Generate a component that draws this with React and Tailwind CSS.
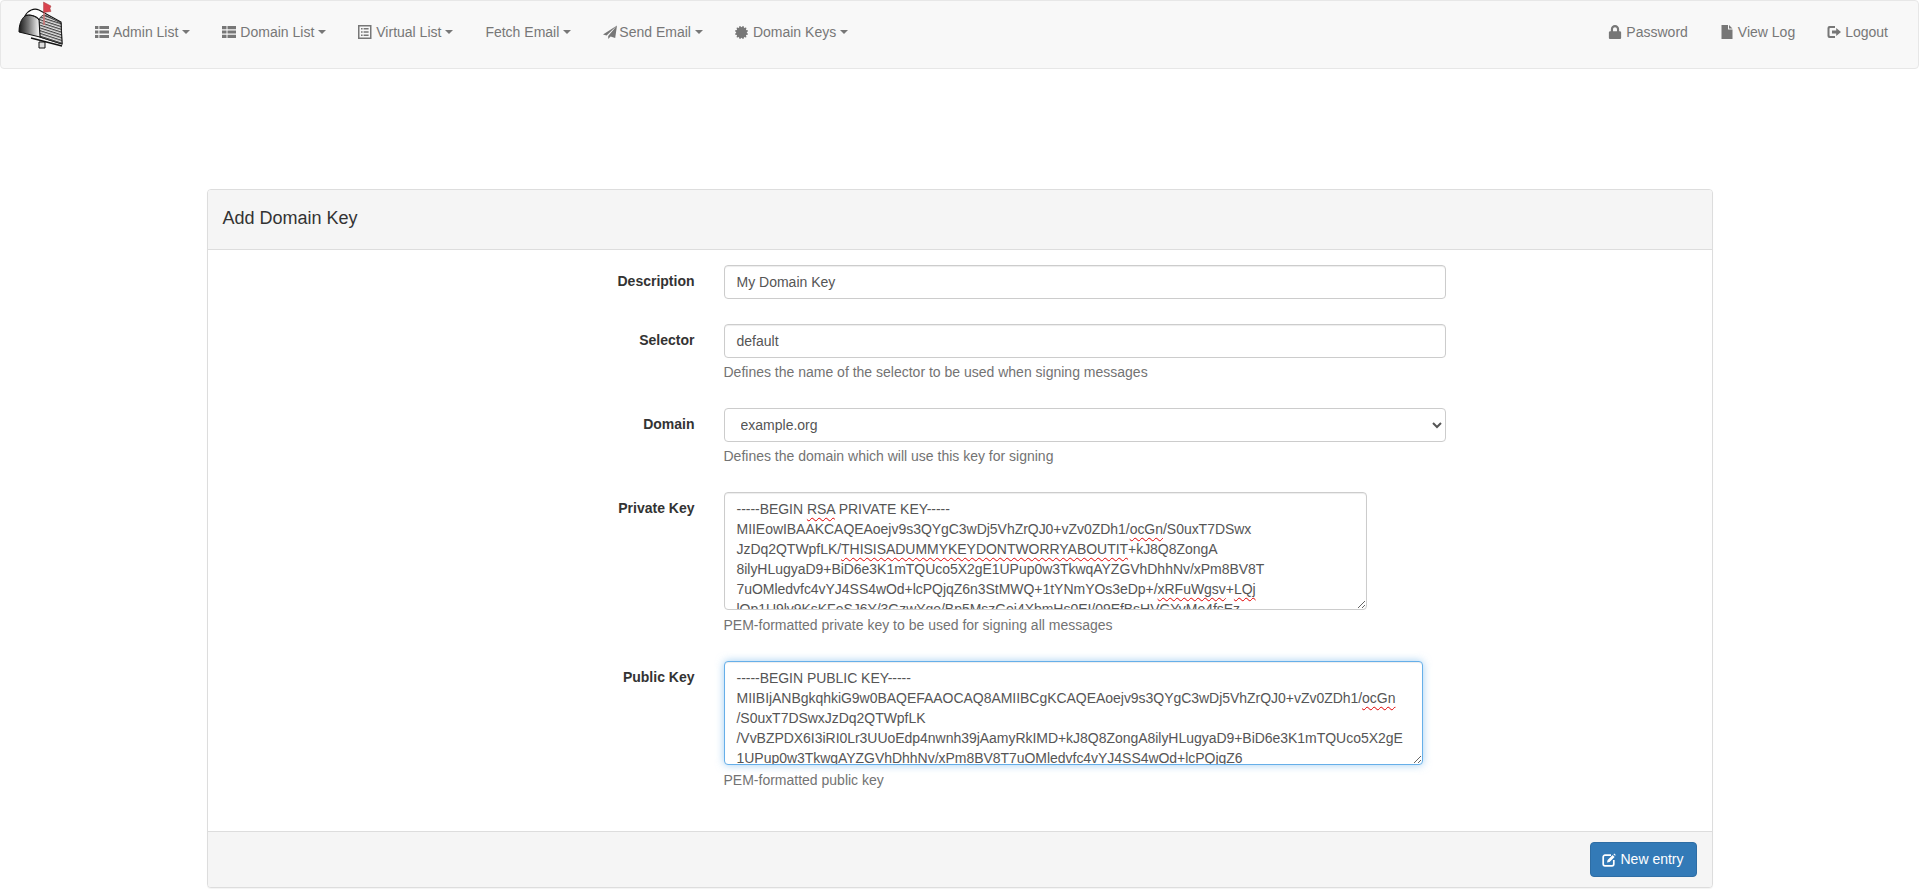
import { FaCertificate, FaLock } from 'react-icons/fa'

function ThList() {
  return (
    <svg viewBox="0 0 14 14" className="w-[14px] h-[14px] fill-current">
      <path d="M0 1h3.4v3H0zM4.4 1H14v3H4.4zM0 5.5h3.4v3H0zM4.4 5.5H14v3H4.4zM0 10h3.4v3H0zM4.4 10H14v3H4.4z" />
    </svg>
  )
}

function Th() {
  return (
    <svg viewBox="0 0 14 14" className="w-[14px] h-[14px] fill-current">
      <path d="M0 1h4.5v3.2H0zM5.5 1H14v3.2H5.5zM0 5.4h4.5v3.2H0zM5.5 5.4H14v3.2H5.5zM0 9.8h4.5V13H0zM5.5 9.8H14V13H5.5z" />
    </svg>
  )
}

function ListAlt() {
  return (
    <svg viewBox="0 0 14 14" className="w-[14px] h-[14px] fill-current">
      <path fillRule="evenodd" d="M0 0h13.500v14H0zM1.500 1.500v11h10.500v-11zM3 3h1.600v1.600H3zM5.600 3h5v1.600h-5zM3 6.200h1.600v1.600H3zM5.600 6.200h5v1.600h-5zM3 9.400h1.600V11H3zM5.600 9.400h5V11h-5z" />
    </svg>
  )
}

function Send() {
  return (
    <svg viewBox="0 0 14 14" className="w-[14px] h-[14px] fill-current">
      <path d="M14 0.500L0 9.500l3.600 1L14 0.500zM14 0.500L5.200 11v3l2.400-2.600 4.600 1.600L14 0.500z" />
    </svg>
  )
}

function FileIcon() {
  return (
    <svg viewBox="0 0 14 14" className="w-[14px] h-[14px] fill-current">
      <path d="M1.500 0h6.500v4.500h4.500V14h-11zM9 0l3.500 3.500H9z" />
    </svg>
  )
}

function LogOut() {
  return (
    <svg viewBox="0 0 14 14" className="w-[14px] h-[14px] fill-current">
      <path d="M2.500 1H8v2H3.200A0.700 0.700 0 0 0 2.500 3.700v6.600a0.700 0.700 0 0 0 0.700 0.700H8v2H2.500A2 2 0 0 1 0.500 11V3a2 2 0 0 1 2-2z" />
      <path d="M5 5.500h4.200V3L14 7l-4.800 4V8.500H5z" />
    </svg>
  )
}

function EditIcon() {
  return (
    <svg viewBox="0 0 14 14" className="w-[14px] h-[14px]">
      <path d="M9 2.200H3A1.800 1.800 0 0 0 1.200 4v7A1.800 1.800 0 0 0 3 12.800h7a1.800 1.800 0 0 0 1.800-1.800V7" fill="none" stroke="currentColor" strokeWidth="1.700" />
      <path d="M5 9.500l0.600-2.600 5-5 2 2-5 5zM11.400 1.200l0.800-0.800 1.600 1.600-0.800 0.800z" fill="currentColor" />
    </svg>
  )
}

function Mailbox() {
  return (
    <svg viewBox="16 0 46 48" className="w-[46px] h-[48px]">
      <defs>
        <linearGradient id="door" x1="0" x2="1" y1="0" y2="0">
          <stop offset="0" stopColor="#1a1a1a" />
          <stop offset="0.45" stopColor="#777" />
          <stop offset="1" stopColor="#fff" />
        </linearGradient>
        <pattern id="ribs" width="3" height="2.600" patternUnits="userSpaceOnUse" patternTransform="rotate(18)">
          <rect width="3" height="2.600" fill="#e4e4e4" />
          <rect width="3" height="1.200" fill="#444" />
        </pattern>
      </defs>
      <path d="M38 41h6v6h-6z" fill="#ddd" stroke="#111" />
      <path d="M30 37l31 8" stroke="#111" strokeWidth="1.400" />
      <path d="M24 15C27 9 33 7 38 9L60 21 61 43 39 36 38 19C36 15 29 13 24 15z" fill="#fff" stroke="#111" strokeWidth="1.200" />
      <path d="M38 19C39 16 41 14 44 14L60 22 61 43 39 36z" fill="url(#ribs)" stroke="#111" strokeWidth="0.800" />
      <path d="M18 31C18 24 20 18 24 15C28 13 35 15 38 19L39 36z" fill="url(#door)" stroke="#111" />
      <path d="M43 12v12" stroke="#c77" strokeWidth="1.600" />
      <path d="M42.500 1l7.500 4-1 2.500 1 3-7.500 1z" fill="#d9434e" stroke="#933" strokeWidth="0.400" />
    </svg>
  )
}

function NavItem({ icon, label, caret, tight }) {
  return (
    <a className="flex items-center text-[#777] text-[14px]">
      {icon && <span className={`w-[14px] flex justify-center ${tight ? 'mr-[2px]' : 'mr-[4px]'}`}>{icon}</span>}
      <span>{label}</span>
      {caret && <span className="ml-[4px] w-0 h-0 border-x-[4px] border-x-transparent border-t-[4px] border-t-[#777]"></span>}
    </a>
  )
}

function Bad({ children }) {
  return <span className="underline decoration-wavy decoration-[#e00000] decoration-1 underline-offset-[3px]">{children}</span>
}

function Field({ label, help, tall, children }) {
  return (
    <div className="flex gap-[29px]">
      <label className="w-[487px] shrink-0 text-right font-bold text-[#333] text-[14px] pt-[6px] leading-[20px]">{label}</label>
      <div className="flex-1">
        {children}
        {help && <p className={`${tall ? 'mt-[5px] mb-[1px]' : 'mt-[4px] mb-px'} text-[14px] leading-[20px] text-[#737373]`}>{help}</p>}
      </div>
    </div>
  )
}

const inputCls = 'w-[722px] h-[34px] border border-[#ccc] rounded-[4px] px-3 pb-px text-[14px] leading-[20px] text-[#555] bg-white shadow-[inset_0_1px_1px_rgba(0,0,0,0.075)] flex items-center'

export default function App() {
  return (
    <div className="min-h-[891px] bg-white font-['Liberation_Sans',Arial,sans-serif] text-[14px] text-[#333] overflow-hidden">
      <nav className="h-[69px] bg-[#f8f8f8] border border-[#e7e7e7] rounded-[4px] flex justify-between">
        <div className="flex">
          <div className="ml-[16px] w-[78px]"><Mailbox /></div>
          <div className="flex h-[62px] items-center gap-[32px]">
            <NavItem icon={<ThList />} label="Admin List" caret />
            <NavItem icon={<Th />} label="Domain List" caret />
            <NavItem icon={<ListAlt />} label="Virtual List" caret />
            <NavItem label="Fetch Email" caret />
            <NavItem icon={<Send />} label="Send Email" caret tight />
            <NavItem icon={<FaCertificate className="w-[13px] h-[13px]" />} label="Domain Keys" caret />
          </div>
        </div>
        <div className="flex h-[62px] items-center gap-[32px] pr-[30px]">
          <NavItem icon={<FaLock className="w-[14px] h-[14px]" />} label="Password" />
          <NavItem icon={<FileIcon />} label="View Log" />
          <NavItem icon={<LogOut />} label="Logout" />
        </div>
      </nav>

      <div className="mx-auto mt-[120px] w-[1506px] border border-[#ddd] rounded-[4px] shadow-[0_1px_1px_rgba(0,0,0,0.05)] bg-white">
        <div className="h-[60px] pb-[2px] bg-[#f5f5f5] border-b border-[#ddd] rounded-t-[3px] px-[15px] flex items-center text-[18px] text-[#333]">Add Domain Key</div>
        <div className="pt-[15px] pb-[15px] flex flex-col gap-[25px] h-[581px]">
          <Field label="Description">
            <div className={inputCls}>My Domain Key</div>
          </Field>
          <Field label="Selector" help="Defines the name of the selector to be used when signing messages">
            <div className={inputCls}>default</div>
          </Field>
          <Field label="Domain" help="Defines the domain which will use this key for signing">
            <select defaultValue="example.org" className="block w-[722px] h-[34px] border border-[#ccc] rounded-[4px] px-3 pb-px text-[14px] text-[#555] bg-white">
              <option>example.org</option>
            </select>
          </Field>
          <Field label="Private Key" tall help="PEM-formatted private key to be used for signing all messages">
            <div className="w-[643px] h-[118px] resize overflow-hidden border border-[#ccc] rounded-[4px] px-3 py-[6px] text-[14px] leading-[20px] tracking-[-0.035px] text-[#555] whitespace-nowrap bg-white shadow-[inset_0_1px_1px_rgba(0,0,0,0.075)]">
              <div>-----BEGIN <Bad>RSA</Bad> PRIVATE KEY-----</div>
              <div>MIIEowIBAAKCAQEAoejv9s3QYgC3wDj5VhZrQJ0+vZv0ZDh1/<Bad>ocGn</Bad>/S0uxT7DSwx</div>
              <div>JzDq2QTWpfLK/<Bad>THISISADUMMYKEYDONTWORRYABOUTIT</Bad>+kJ8Q8ZongA</div>
              <div>8ilyHLugyaD9+BiD6e3K1mTQUco5X2gE1UPup0w3TkwqAYZGVhDhhNv/xPm8BV8T</div>
              <div>7uOMledvfc4vYJ4SS4wOd+lcPQjqZ6n3StMWQ+1tYNmYOs3eDp+/<Bad>xRFuWgsv</Bad>+<Bad>LQj</Bad></div>
              <div>lOp1U9lv9KsKFeSJ6Y/3GzwYge/Bp5MszGej4XbmHs0EI/09EfBsHVGYvMe4fsEz</div>
            </div>
          </Field>
          <Field label="Public Key" tall help="PEM-formatted public key">
            <div className="w-[699px] h-[104px] resize overflow-hidden border border-[#66afe9] rounded-[4px] px-3 py-[6px] text-[14px] leading-[20px] tracking-[-0.035px] text-[#555] whitespace-nowrap bg-white shadow-[inset_0_1px_1px_rgba(0,0,0,0.075),0_0_8px_rgba(102,175,233,0.6)]">
              <div>-----BEGIN PUBLIC KEY-----</div>
              <div>MIIBIjANBgkqhkiG9w0BAQEFAAOCAQ8AMIIBCgKCAQEAoejv9s3QYgC3wDj5VhZrQJ0+vZv0ZDh1/<Bad>ocGn</Bad></div>
              <div>/S0uxT7DSwxJzDq2QTWpfLK</div>
              <div>/VvBZPDX6I3iRI0Lr3UUoEdp4nwnh39jAamyRkIMD+kJ8Q8ZongA8ilyHLugyaD9+BiD6e3K1mTQUco5X2gE</div>
              <div>1UPup0w3TkwqAYZGVhDhhNv/xPm8BV8T7uOMledvfc4vYJ4SS4wOd+lcPQjqZ6</div>
            </div>
          </Field>
        </div>
        <div className="h-[56px] bg-[#f5f5f5] border-t border-[#ddd] rounded-b-[3px] px-[15px] flex items-center justify-end">
          <button className="h-[35px] w-[107px] bg-[#337ab7] border border-[#2e6da4] rounded-[4px] text-white text-[14px] flex items-center justify-center gap-[4px]">
            <EditIcon /> New entry
          </button>
        </div>
      </div>
    </div>
  )
}
